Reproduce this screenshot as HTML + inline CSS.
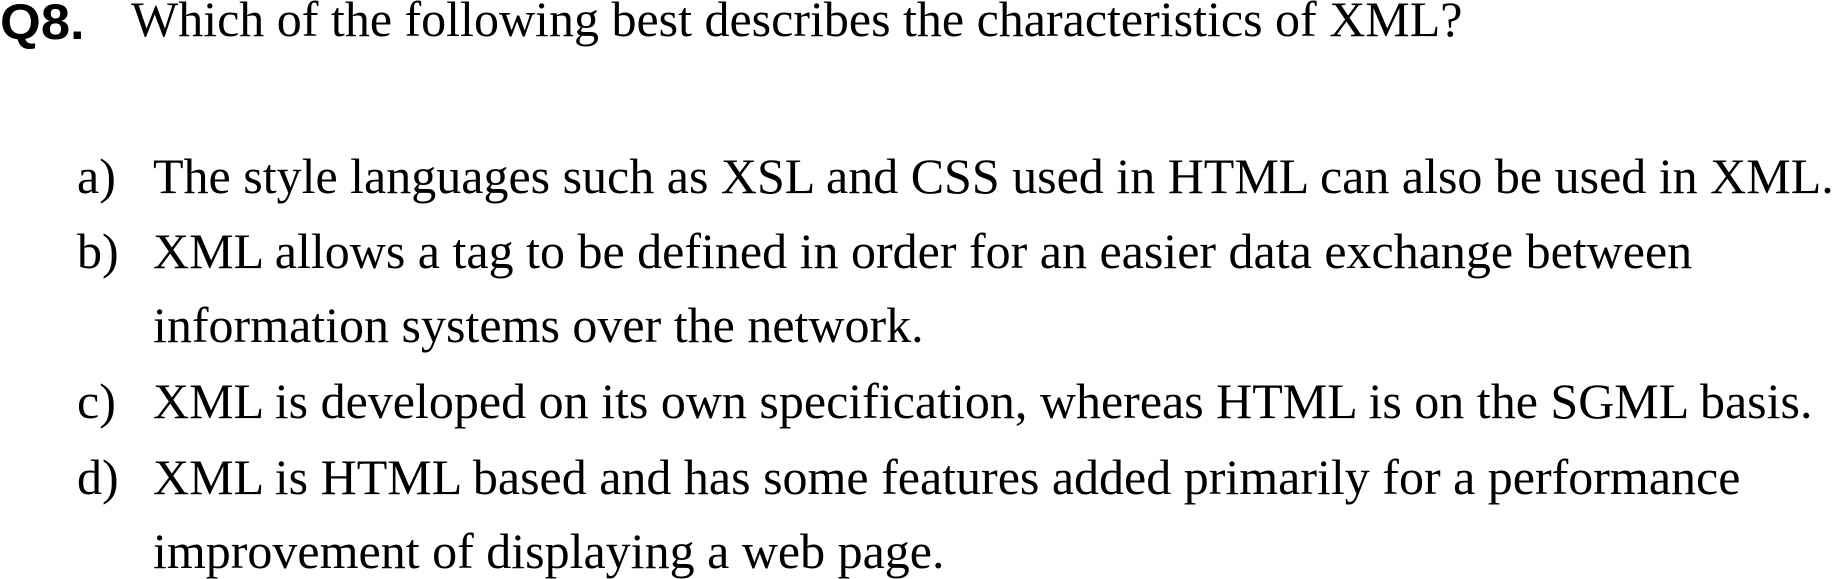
<!DOCTYPE html>
<html><head><meta charset="utf-8"><style>
html,body{margin:0;padding:0;background:#fff;width:1833px;height:576px;overflow:hidden}
.l{position:absolute;white-space:nowrap;font-family:"Liberation Serif",serif;font-size:50px;color:#000;line-height:1}
.q{position:absolute;font-family:"Liberation Sans",sans-serif;font-weight:bold;font-size:50px;line-height:1;transform:scaleX(1.05);transform-origin:left}
</style></head><body>
<div class="q" style="left:0;top:-3px">Q8.</div>
<div class="l" style="left:131px;top:-6px">Which of the following best describes the characteristics of XML?</div>

<div class="l" style="left:77px;top:151px">a)</div>
<div class="l" style="left:153px;top:151px">The style languages such as XSL and CSS used in HTML can also be used in XML.</div>
<div class="l" style="left:77px;top:226px">b)</div>
<div class="l" style="left:153px;top:226px">XML allows a tag to be defined in order for an easier data exchange between</div>
<div class="l" style="left:153px;top:300px">information systems over the network.</div>
<div class="l" style="left:77px;top:376px">c)</div>
<div class="l" style="left:153px;top:376px">XML is developed on its own specification, whereas HTML is on the SGML basis.</div>
<div class="l" style="left:77px;top:452px">d)</div>
<div class="l" style="left:153px;top:452px">XML is HTML based and has some features added primarily for a performance</div>
<div class="l" style="left:153px;top:526px">improvement of displaying a web page.</div>
</body></html>
